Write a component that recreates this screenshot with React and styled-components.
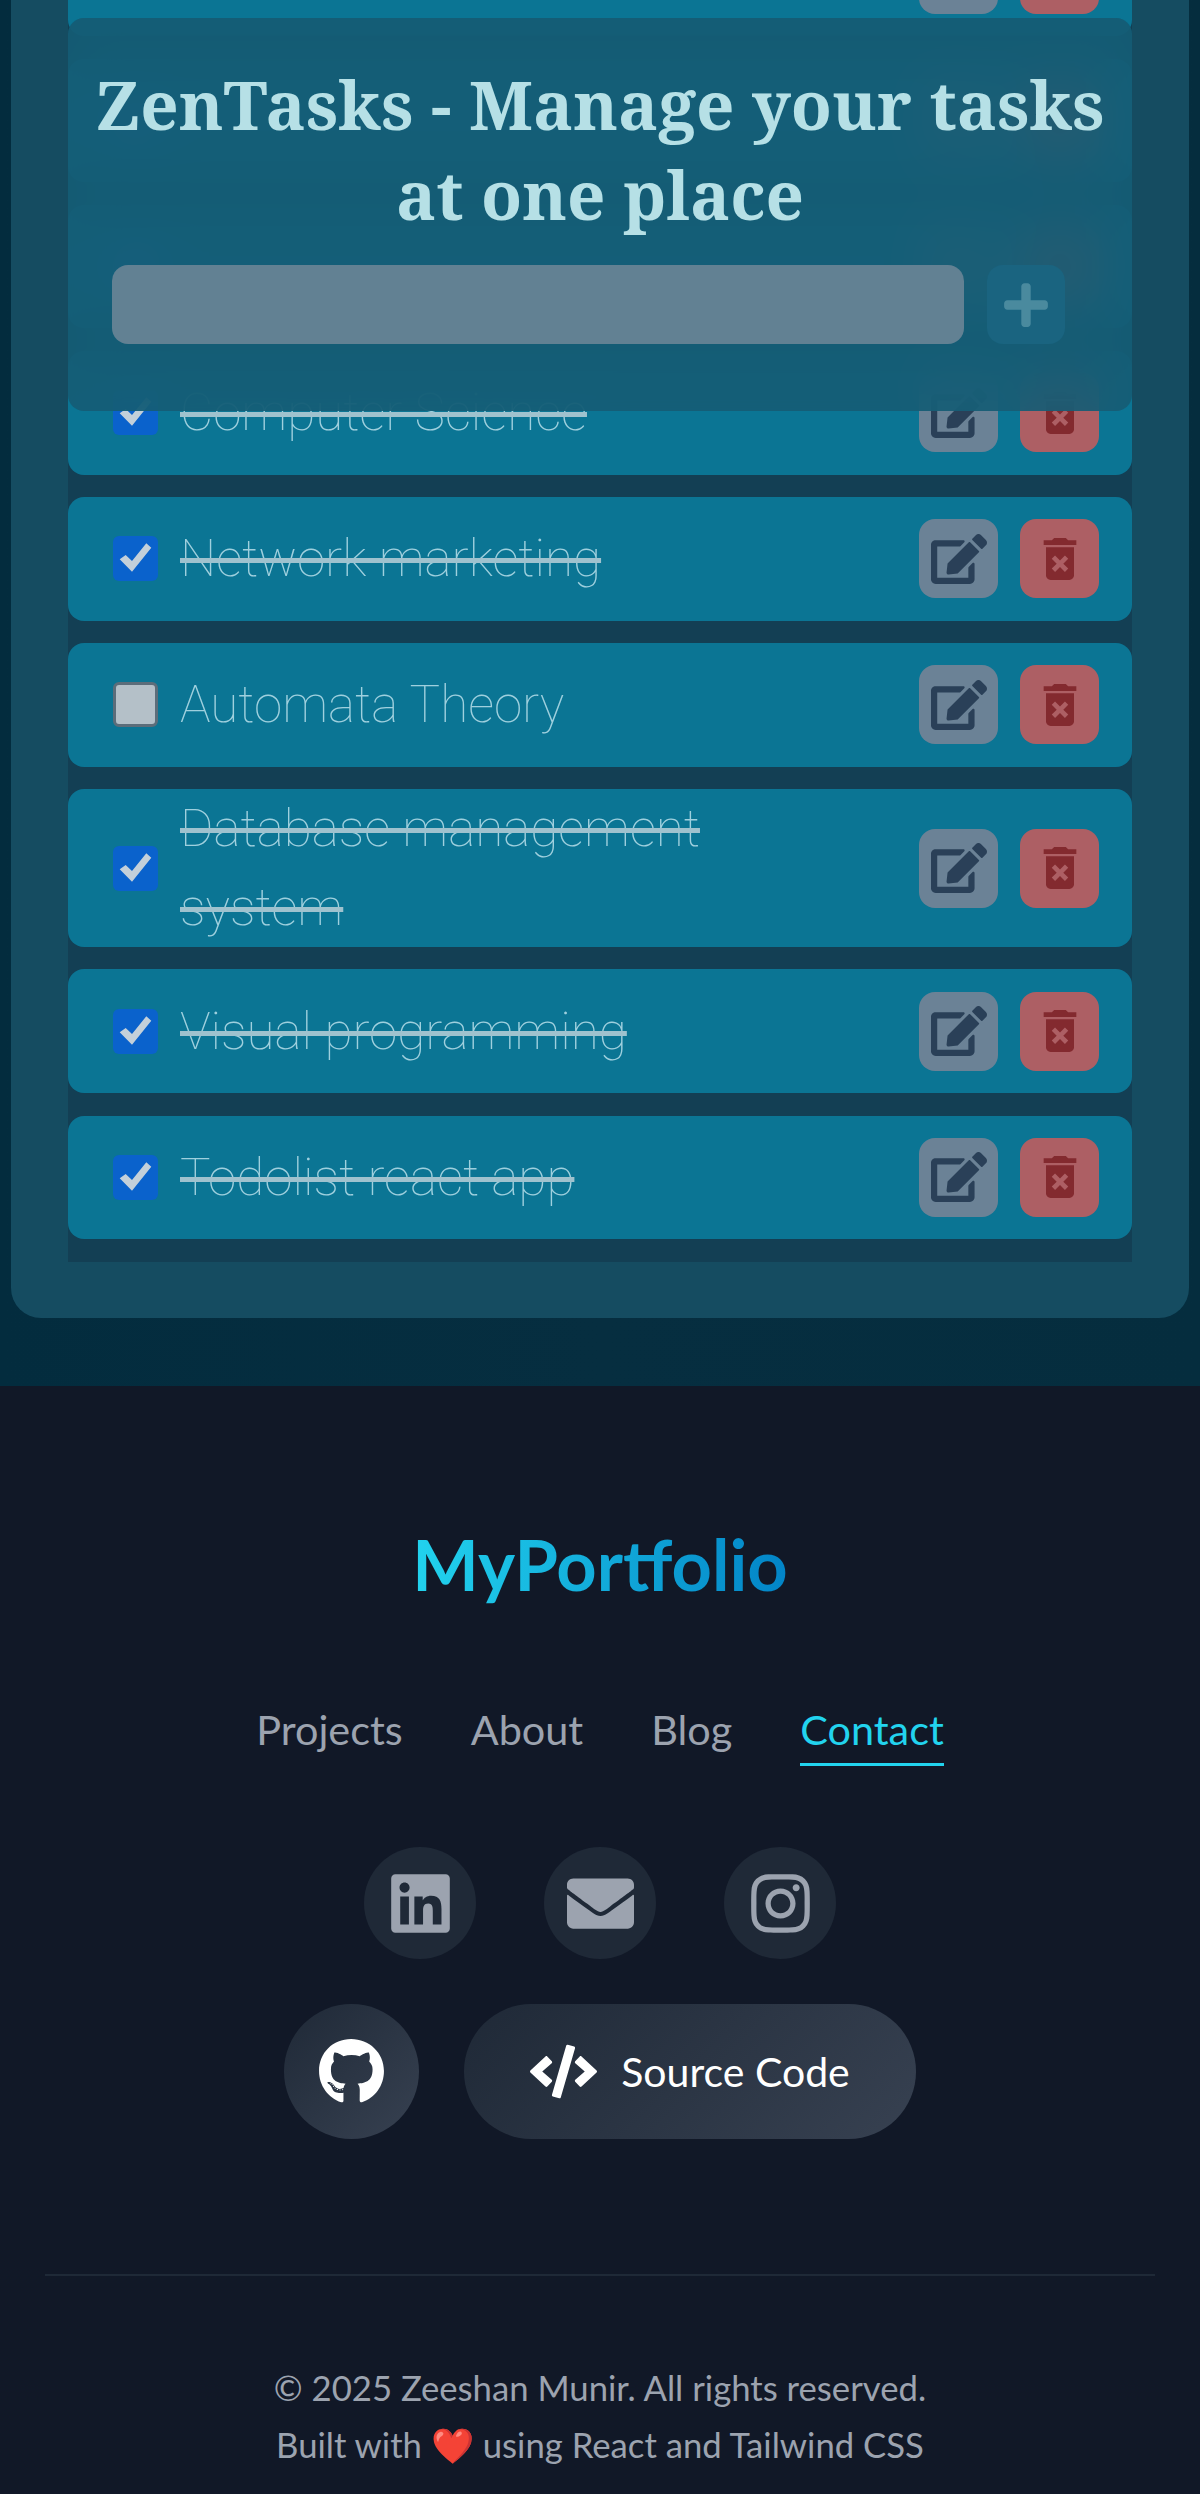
import styled, { createGlobalStyle } from "styled-components";
import { FaEdit, FaLinkedin, FaEnvelope, FaInstagram, FaGithub, FaCode, FaPlus } from "react-icons/fa";
import { MdDeleteForever } from "react-icons/md";

const GlobalStyle = createGlobalStyle`
  html, body { margin: 0; padding: 0; background: #111827; }
  * { box-sizing: border-box; }
`;

const Page = styled.div`
  width: 1200px;
  height: 2494px;
  overflow: hidden;
  font-family: "Lato", "Liberation Sans", sans-serif;
`;

const Main = styled.main`
  height: 1386px;
  padding: 0 11px;
  overflow: hidden;
  background: linear-gradient(90deg, #032c3e 0%, #062e40 50%, #052d3e 100%);
`;

const Card = styled.section`
  position: relative;
  height: 1318px;
  padding: 0 57px;
  background: #154c61;
  border-radius: 0 0 30px 30px;
`;

const Header = styled.header`
  position: absolute;
  top: 18px;
  left: 57px;
  right: 57px;
  height: 393px;
  padding: 41px 20px 0;
  border-radius: 16px;
  background: rgba(21, 92, 116, 0.9);
  backdrop-filter: blur(24px);
  z-index: 2;
`;

const Title = styled.h1`
  margin: 0;
  text-align: center;
  font-family: "Noto Serif", "DejaVu Serif", "Liberation Serif", serif;
  font-size: 67.2px;
  line-height: 90px;
  font-weight: 700;
  color: #b6e0e6;
`;

const AddForm = styled.form`
  display: flex;
  gap: 23px;
  margin: 26px 47px 0 24px;
`;

const TaskInput = styled.div`
  flex: 1;
  height: 79px;
  border-radius: 16px;
  background: #628193;
`;

const AddButton = styled.div`
  width: 78px;
  height: 79px;
  display: flex;
  align-items: center;
  justify-content: center;
  border-radius: 16px;
  background: #1a6480;
  color: #4a8a9e;
  font-size: 50px;
`;

const List = styled.ul`
  list-style: none;
  margin: 0;
  padding: 0 0 22.4px;
  position: relative;
  top: -87.4px;
  display: flex;
  flex-direction: column;
  gap: 22.4px;
  background: #133f54;
`;

const Row = styled.li`
  min-height: 123.7px;
  display: flex;
  align-items: center;
  padding: 0 33px 0 45px;
  border-radius: 16px;
  background: #0b7594;
`;

const Check = styled.span`
  flex: none;
  width: 45px;
  height: 45px;
  display: flex;
  align-items: center;
  justify-content: center;
  border-radius: 6px;
  background: ${(p) => (p.$done ? "#0a62cc" : "#b4c0c8")};
  border: ${(p) => (p.$done ? "none" : "3px solid #5c6d7a")};
`;

const TaskText = styled.span`
  flex: none;
  width: 620px;
  margin-left: 22px;
  font-family: "Roboto", "Inter", sans-serif;
  font-weight: 100;
  font-size: 51.2px;
  line-height: 79px;
  color: #9fd0de;
  text-decoration: ${(p) => (p.$done ? "line-through" : "none")};
  text-decoration-thickness: 5px;
  text-decoration-color: #9fc2ce;
`;

const Actions = styled.div`
  margin-left: auto;
  display: flex;
  gap: 22px;
`;

const ActionButton = styled.button`
  width: 79px;
  height: 79px;
  padding: 0;
  border: none;
  border-radius: 16px;
  display: flex;
  align-items: center;
  justify-content: center;
  background: ${(p) => (p.$danger ? "#ad5f64" : "#6b8296")};
  color: ${(p) => (p.$danger ? "#832a2f" : "#2a4058")};
  font-size: 56px;
`;

const Footer = styled.footer`
  height: 1108px;
  background: #111827;
  display: flex;
  flex-direction: column;
  align-items: center;
  padding-top: 136px;
`;

const Logo = styled.div`
  font-size: 70.4px;
  line-height: 84px;
  font-weight: 700;
  background: linear-gradient(90deg, #22d3ee, #0284c7);
  -webkit-background-clip: text;
  background-clip: text;
  color: transparent;
`;

const Nav = styled.nav`
  display: flex;
  gap: 68px;
  margin-top: 93px;
`;

const NavLink = styled.a`
  font-size: 41.4px;
  line-height: 60px;
  padding-bottom: 4px;
  color: ${(p) => (p.$active ? "#22d3ee" : "#9ca3af")};
  border-bottom: 3px solid ${(p) => (p.$active ? "#22d3ee" : "transparent")};
`;

const Socials = styled.div`
  display: flex;
  gap: 68px;
  margin-top: 81px;
`;

const SocialLink = styled.a`
  width: 112px;
  height: 112px;
  border-radius: 50%;
  display: flex;
  align-items: center;
  justify-content: center;
  background: #1f2937;
  color: #9ca3af;
  font-size: 67px;
`;

const RepoLinks = styled.div`
  display: flex;
  gap: 45px;
  margin-top: 45px;
`;

const RepoIcon = styled.a`
  width: 135px;
  height: 135px;
  border-radius: 50%;
  display: flex;
  align-items: center;
  justify-content: center;
  background: linear-gradient(135deg, #1f2937, #374151);
  color: #fff;
  font-size: 67px;
`;

const SourceLink = styled.a`
  width: 452px;
  height: 135px;
  border-radius: 68px;
  display: flex;
  align-items: center;
  justify-content: center;
  gap: 24px;
  background: linear-gradient(135deg, #1f2937, #374151);
  color: #fff;
  font-size: 41px;
  svg { font-size: 67px; }
`;

const Divider = styled.hr`
  align-self: stretch;
  margin: 135px 45px 0;
  border: none;
  height: 2px;
  background: #1f2937;
`;

const Copy = styled.div`
  margin-top: 83px;
  text-align: center;
  font-size: 34.7px;
  line-height: 57px;
  color: #9ca3af;
`;

const rows = [
  { text: "", done: true },
  { text: "", done: true },
  { text: "", done: true },
  { text: "Computer Science", done: true },
  { text: "Network marketing", done: true },
  { text: "Automata Theory", done: false },
  { text: "Database management system", done: true },
  { text: "Visual programming", done: true },
  { text: "Todolist react app", done: true },
];

function CheckMark() {
  return (
    <svg width="45" height="45" viewBox="0 0 45 45">
      <path d="M6.7 23.3L12.7 19 19 25 33.3 7.3 38.3 11.7 19 35.7z" fill="#c3d0da" />
    </svg>
  );
}

export default function App() {
  return (
    <Page>
      <GlobalStyle />
      <Main>
        <Card>
          <Header>
            <Title>ZenTasks - Manage your tasks at one place</Title>
            <AddForm>
              <TaskInput />
              <AddButton>
                <FaPlus />
              </AddButton>
            </AddForm>
          </Header>
          <List>
            {rows.map((row, i) => (
              <Row key={i}>
                <Check $done={row.done}>{row.done && <CheckMark />}</Check>
                <TaskText $done={row.done}>{row.text}</TaskText>
                <Actions>
                  <ActionButton>
                    <FaEdit />
                  </ActionButton>
                  <ActionButton $danger>
                    <MdDeleteForever />
                  </ActionButton>
                </Actions>
              </Row>
            ))}
          </List>
        </Card>
      </Main>
      <Footer>
        <Logo>MyPortfolio</Logo>
        <Nav>
          <NavLink>Projects</NavLink>
          <NavLink>About</NavLink>
          <NavLink>Blog</NavLink>
          <NavLink $active>Contact</NavLink>
        </Nav>
        <Socials>
          <SocialLink>
            <FaLinkedin />
          </SocialLink>
          <SocialLink>
            <FaEnvelope />
          </SocialLink>
          <SocialLink>
            <FaInstagram />
          </SocialLink>
        </Socials>
        <RepoLinks>
          <RepoIcon>
            <FaGithub />
          </RepoIcon>
          <SourceLink>
            <FaCode />
            Source Code
          </SourceLink>
        </RepoLinks>
        <Divider />
        <Copy>
          © 2025 Zeeshan Munir. All rights reserved.
          <br />
          Built with ❤️ using React and Tailwind CSS
        </Copy>
      </Footer>
    </Page>
  );
}
